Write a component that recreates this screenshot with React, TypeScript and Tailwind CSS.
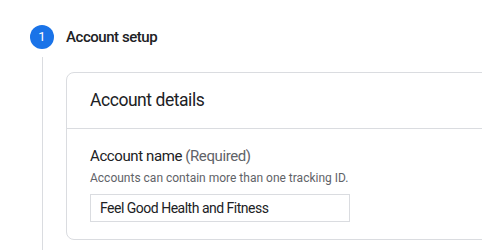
import React from "react";

export default function App() {
  return (
    <div className="w-[482px] h-[250px] overflow-hidden bg-white font-['Roboto',sans-serif] text-[#202124]">
      <div className="pl-[30px] pt-[25px]">
        <div className="flex items-center h-6">
          <div className="w-6 h-6 rounded-full bg-[#1a73e8] text-white text-[13px] flex items-center justify-center">
            1
          </div>
          <div className="ml-3 text-[15px] font-medium tracking-[-0.45px]">Account setup</div>
        </div>
        <div className="flex mt-[8px]">
          <div className="ml-[12px] w-px bg-[#dadce0] h-[200px] shrink-0" />
          <div className="ml-[23px] mt-[15px] w-[440px] shrink-0 self-start border border-[#dadce0] rounded-lg">
            <div className="h-[56px] flex items-center pl-[23px] border-b border-[#dadce0] text-[17.5px] tracking-[-0.45px]">
              Account details
            </div>
            <div className="pl-[23px] pt-[17px] pb-[17px]">
              <div className="text-[15px] leading-[20px] tracking-[-0.4px]">
                Account name <span className="text-[#5f6368]">(Required)</span>
              </div>
              <div className="text-[12px] leading-[16px] mt-[4px] text-[#5f6368]">
                Accounts can contain more than one tracking ID.
              </div>
              <div className="mt-[8px] w-[260px] h-[28px] border border-[#dadce0] flex items-center pl-[9px] text-[14px] tracking-[-0.5px]">
                Feel Good Health and Fitness
              </div>
            </div>
          </div>
        </div>
      </div>
    </div>
  );
}
